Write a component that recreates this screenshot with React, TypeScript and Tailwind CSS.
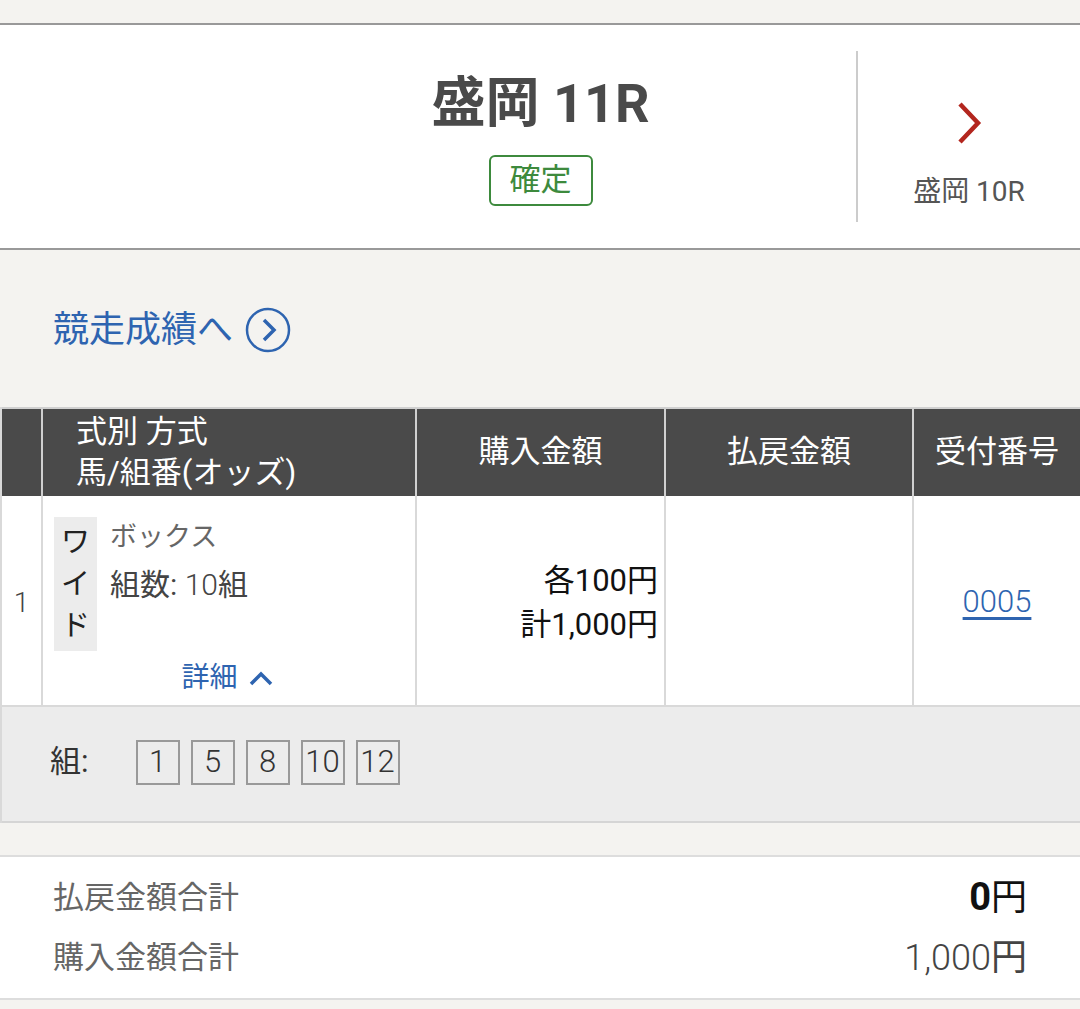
import React from "react";

const F = { fontFamily: "Roboto, 'Noto Sans CJK JP', sans-serif" };

export default function App() {
  return (
    <div style={F} className="w-[1080px] min-h-[1009px] bg-[#f4f3f0] text-[#333]">
      <div className="h-[23px]" />
      <div className="flex h-[227px] border-y-2 border-[#999] bg-white">
        <div className="flex flex-1 flex-col items-center pl-[225px] pt-[47px]">
          <div className="text-[54px] font-bold leading-[1.2] text-[#4a4a4a]">盛岡 11R</div>
          <div className="mt-[18px] flex h-[51px] w-[104px] items-center justify-center rounded-[6px] border-2 border-[#3d8a3d] text-[31px] text-[#3d8a3d]">
            確定
          </div>
        </div>
        <div className="my-[26px] w-[2px] bg-[#ccc]" />
        <div className="flex w-[222px] flex-col items-center pt-[76px]">
          <svg width="30" height="44" viewBox="0 0 30 44">
            <path d="M6 3 L24 22 L6 41" fill="none" stroke="#b3261e" strokeWidth="4.5" />
          </svg>
          <div className="mt-[26px] text-[28px] text-[#555]">盛岡 10R</div>
        </div>
      </div>
      <div className="flex h-[157px] items-center px-[53px] pt-[2px]">
        <span className="text-[36px] text-[#2e64b0]">競走成績へ</span>
        <svg className="ml-[12px]" width="46" height="46" viewBox="0 0 46 46">
          <circle cx="23" cy="23" r="21" fill="none" stroke="#2e64b0" strokeWidth="2.5" />
          <path d="M19 13 L29 23 L19 33" fill="none" stroke="#2e64b0" strokeWidth="3.5" />
        </svg>
      </div>
      <div className="grid grid-cols-[41px_374px_249px_248px_1fr] border-l-2 border-[#d9d9d9]">
        <div className="h-[89px] border-r-2 border-t-2 border-[#d0d0d0] bg-[#4a4a4a]" />
        <div className="flex h-[89px] flex-col justify-center border-r-2 border-t-2 border-[#d0d0d0] bg-[#4a4a4a] pl-[33px] text-[31px] leading-[1.3] text-white">
          <div>式別 方式</div>
          <div>馬/組番(オッズ)</div>
        </div>
        <div className="flex h-[89px] items-center justify-center border-r-2 border-t-2 border-[#d0d0d0] bg-[#4a4a4a] text-[31px] text-white">購入金額</div>
        <div className="flex h-[89px] items-center justify-center border-r-2 border-t-2 border-[#d0d0d0] bg-[#4a4a4a] text-[31px] text-white">払戻金額</div>
        <div className="flex h-[89px] items-center justify-center border-t-2 border-[#d0d0d0] bg-[#4a4a4a] text-[31px] text-white">受付番号</div>

        <div className="flex h-[211px] items-center justify-center border-b-2 border-r-2 border-[#d9d9d9] bg-white pt-[4px] text-[28px] font-light text-[#444]">1</div>
        <div className="flex h-[211px] flex-col border-b-2 border-r-2 border-[#d9d9d9] bg-white pl-[11px] pt-[21px]">
          <div className="flex">
            <div className="flex w-[43px] flex-col items-center bg-[#ececec] py-[4px] text-[29px] leading-[42px] text-[#222]">
              <span>ワ</span>
              <span>イ</span>
              <span>ド</span>
            </div>
            <div className="ml-[13px] leading-[48px]">
              <div className="-mt-[4px] text-[27px] text-[#666]">ボックス</div>
              <div className="text-[30px] text-[#444]">組数: <span className="font-light">10</span>組</div>
            </div>
          </div>
          <div className="mt-[6px] flex items-center justify-center gap-[10px] pr-[14px] text-[28px] text-[#2e64b0]">
            <span>詳細</span>
            <svg width="26" height="18" viewBox="0 0 26 18">
              <path d="M3 15 L13 5 L23 15" fill="none" stroke="#2e64b0" strokeWidth="3.5" />
            </svg>
          </div>
        </div>
        <div className="flex h-[211px] flex-col items-end justify-center border-b-2 border-r-2 border-[#d9d9d9] bg-white pr-[6px] pt-[4px] text-[31px] leading-[44px] text-[#111]">
          <div>各100円</div>
          <div>計1,000円</div>
        </div>
        <div className="h-[211px] border-b-2 border-r-2 border-[#d9d9d9] bg-white" />
        <div className="flex h-[211px] items-center justify-center border-b-2 border-[#d9d9d9] bg-white pt-[4px] text-[31px] font-light text-[#2e64b0] underline underline-offset-[5px]">0005</div>

        <div className="col-span-5 flex h-[116px] items-center border-b-2 border-[#d5d5d5] bg-[#ececec] pb-[4px] pl-[48px]">
          <span className="text-[31px] text-[#333]">組:</span>
          <div className="ml-[47px] flex gap-[11px]">
            {["1", "5", "8", "10", "12"].map((n) => (
              <div key={n} className="flex h-[45px] w-[44px] items-center justify-center border-2 border-[#999] text-[31px] font-light text-[#333]">
                {n}
              </div>
            ))}
          </div>
        </div>
      </div>
      <div className="h-[32px]" />
      <div className="flex h-[145px] flex-col justify-center border-y-2 border-[#ddd] bg-white px-[53px]">
        <div className="flex items-center justify-between leading-[60px]">
          <span className="text-[31px] text-[#666]">払戻金額合計</span>
          <span className="text-[36px] text-[#111]"><span className="text-[38px] font-bold">0</span>円</span>
        </div>
        <div className="flex items-center justify-between leading-[60px]">
          <span className="text-[31px] text-[#666]">購入金額合計</span>
          <span className="text-[36px] text-[#444]"><span className="font-light">1,000</span>円</span>
        </div>
      </div>
    </div>
  );
}
